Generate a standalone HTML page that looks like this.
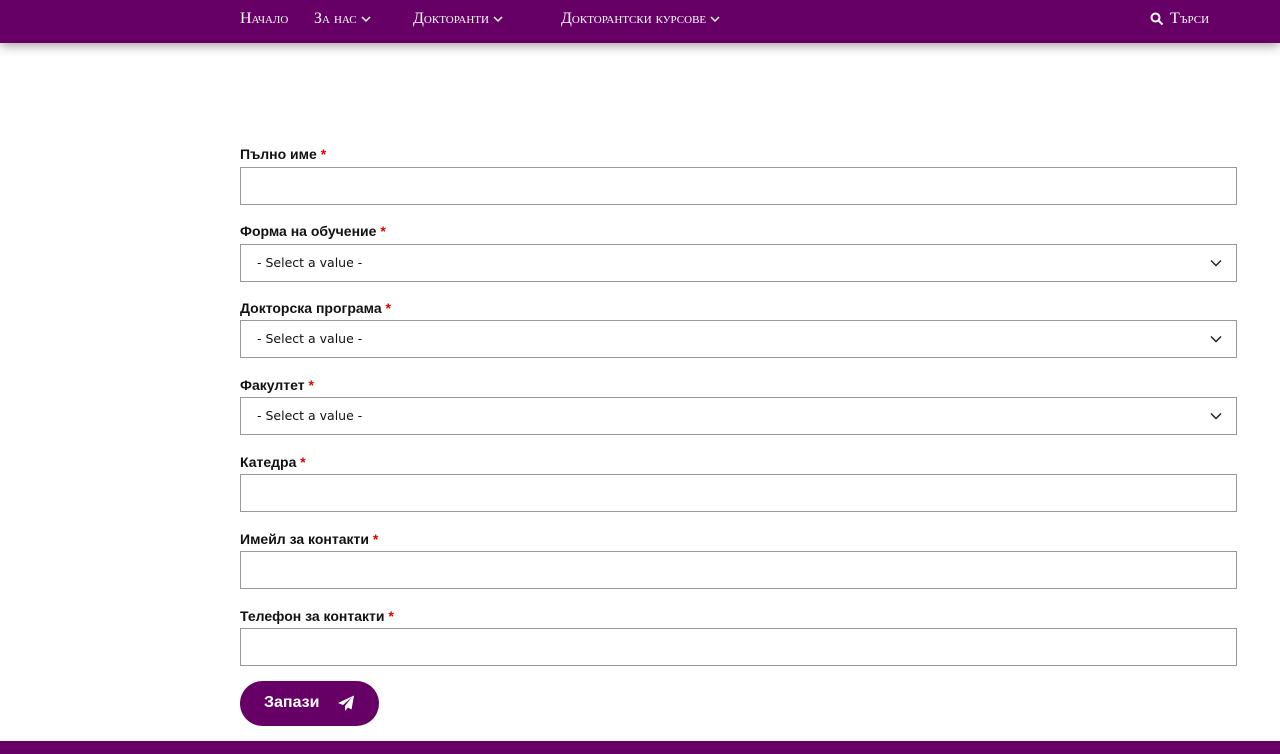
<!DOCTYPE html>
<html><head><meta charset="utf-8"><style>
*{box-sizing:border-box;margin:0;padding:0}
body{width:1280px;height:754px;overflow:hidden;background:#fff;font-family:"Liberation Sans",sans-serif;position:relative}
.nav{position:absolute;top:0;left:0;width:1280px;height:43px;background:#660066;box-shadow:0 3px 10px rgba(0,0,0,.35);color:#fff;font-family:"Liberation Serif",serif;font-size:16px;font-variant:small-caps}
.nav span{position:absolute;top:10px;white-space:nowrap}
.nav svg{vertical-align:middle;margin-left:4px}
.lbl{position:absolute;left:240px;font-weight:bold;font-size:14px;color:#111}
.lbl b{color:#e00000}
.inp{position:absolute;left:240px;width:997px;height:38px;border:1px solid #999;background:#fff}
.sel{font-family:"DejaVu Sans",sans-serif;font-size:12.5px;padding:10px 16px;color:#111}
.sel svg{position:absolute;right:14px;top:14px}
.btn{position:absolute;left:240px;top:681px;width:139px;height:45px;border-radius:23px;background:#660066;color:#fff;font-weight:bold;font-size:16px;padding:13px 0 0 24px}
.btn svg{position:absolute;left:97px;top:14px}
.foot{position:absolute;left:0;top:741px;width:1280px;height:13px;background:#660066}
</style></head><body>
<div class="nav">
<span style="left:240px">Начало</span>
<span style="left:314px">За нас<svg width="10" height="8" viewBox="0 0 10 8"><path d="M1 2l4 4 4-4" stroke="#fff" stroke-width="1.5" fill="none"/></svg></span>
<span style="left:413px">Докторанти<svg width="10" height="8" viewBox="0 0 10 8"><path d="M1 2l4 4 4-4" stroke="#fff" stroke-width="1.5" fill="none"/></svg></span>
<span style="left:561px">Докторантски курсове<svg width="10" height="8" viewBox="0 0 10 8"><path d="M1 2l4 4 4-4" stroke="#fff" stroke-width="1.5" fill="none"/></svg></span>
<span style="left:1150px"><svg width="14" height="14" viewBox="0 0 14 14" style="margin:0 6px 0 0"><circle cx="5.5" cy="5.5" r="4" stroke="#fff" stroke-width="2" fill="none"/><path d="M8.5 8.5l4 4" stroke="#fff" stroke-width="2"/></svg>Търси</span>
</div>

<div class="lbl" style="top:146px">Пълно име <b>*</b></div>
<div class="inp" style="top:167px"></div>
<div class="lbl" style="top:223px">Форма на обучение <b>*</b></div>
<div class="inp sel" style="top:244px">- Select a value -<svg width="12" height="8" viewBox="0 0 12 8"><path d="M1 1.5l5 5 5-5" stroke="#222" stroke-width="1.5" fill="none"/></svg></div>
<div class="lbl" style="top:300px">Докторска програма <b>*</b></div>
<div class="inp sel" style="top:320px">- Select a value -<svg width="12" height="8" viewBox="0 0 12 8"><path d="M1 1.5l5 5 5-5" stroke="#222" stroke-width="1.5" fill="none"/></svg></div>
<div class="lbl" style="top:377px">Факултет <b>*</b></div>
<div class="inp sel" style="top:397px">- Select a value -<svg width="12" height="8" viewBox="0 0 12 8"><path d="M1 1.5l5 5 5-5" stroke="#222" stroke-width="1.5" fill="none"/></svg></div>
<div class="lbl" style="top:454px">Катедра <b>*</b></div>
<div class="inp" style="top:474px"></div>
<div class="lbl" style="top:531px">Имейл за контакти <b>*</b></div>
<div class="inp" style="top:551px"></div>
<div class="lbl" style="top:608px">Телефон за контакти <b>*</b></div>
<div class="inp" style="top:628px"></div>

<div class="btn">Запази<svg width="18" height="17" viewBox="0 0 18 17"><path d="M17 0.5L1 8l5 2 9-8-7 9v5l3-3.5 3.5 2z" fill="#fff"/></svg></div>
<div class="foot"></div>
</body></html>
